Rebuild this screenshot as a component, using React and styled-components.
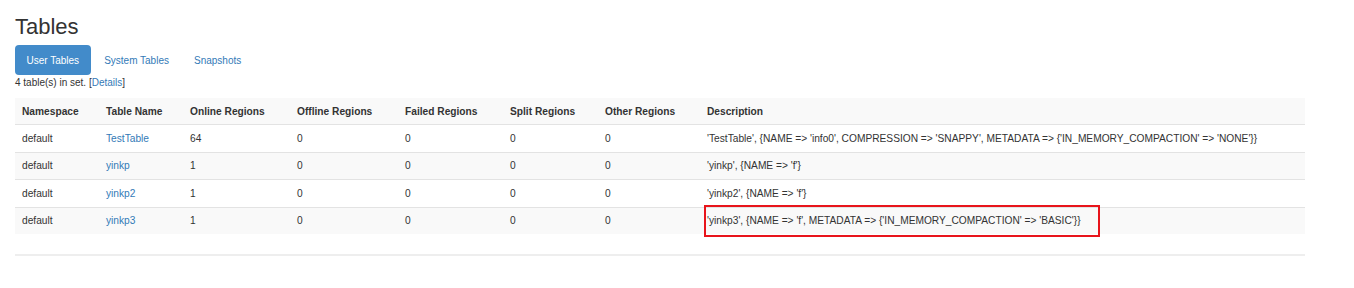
import styled, { createGlobalStyle } from 'styled-components';

const GlobalStyle = createGlobalStyle`
  body {
    margin: 0;
    background: #fff;
    font-family: "Liberation Sans", Arial, sans-serif;
    font-size: 10px;
    color: #333;
  }
`;

const Page = styled.div`
  width: 1290px;
  padding: 0 15px;
`;

const Title = styled.h1`
  margin: 0;
  padding-top: 12px;
  font-size: 22px;
  font-weight: 400;
  line-height: 30px;
  color: #333;
`;

const Tabs = styled.ul`
  display: flex;
  gap: 2px;
  margin: 3px 0 0;
  padding: 0;
  list-style: none;
`;

const Tab = styled.li`
  height: 30px;
  padding: 0 11.5px;
  display: flex;
  align-items: center;
  border-radius: 4px;
  background: ${(p) => (p.$active ? '#428bca' : 'transparent')};
  color: ${(p) => (p.$active ? '#fff' : '#337ab7')};
  cursor: pointer;
`;

const Summary = styled.p`
  margin: 0;
  line-height: 15px;
`;

const Link = styled.a`
  color: #337ab7;
  text-decoration: none;
`;

const Table = styled.table`
  width: 100%;
  margin-top: 8px;
  border-collapse: collapse;
  table-layout: fixed;
  font-size: 10.2px;
`;

const Row = styled.tr`
  background: ${(p) => (p.$striped ? '#f9f9f9' : '#fff')};
  border-top: 1px solid #e3e3e3;

  &:first-child {
    border-top: none;
  }
`;

const HeadCell = styled.th`
  box-sizing: border-box;
  width: ${(p) => p.$w || 'auto'};
  padding: 6.5px 7px 5.5px;
  line-height: 14.4px;
  text-align: left;
  font-weight: 700;
  white-space: nowrap;
`;

const Cell = styled.td`
  padding: 6.5px 7px 5.5px;
  line-height: 14.4px;
  white-space: nowrap;
`;

const Highlight = styled.span`
  position: relative;
  display: inline-block;

  &::after {
    content: '';
    position: absolute;
    top: -9px;
    bottom: -8px;
    left: -3px;
    right: -19px;
    border: 2px solid #e8141b;
  }
`;

const Rule = styled.hr`
  margin: 20px 0 0;
  border: none;
  border-top: 2px solid #eee;
`;

const columns = [
  ['Namespace', '84px'],
  ['Table Name', '84px'],
  ['Online Regions', '107px'],
  ['Offline Regions', '108px'],
  ['Failed Regions', '105px'],
  ['Split Regions', '95px'],
  ['Other Regions', '102px'],
  ['Description', 'auto'],
];

const tables = [
  {
    name: 'TestTable',
    online: 64,
    desc: "'TestTable', {NAME => 'info0', COMPRESSION => 'SNAPPY', METADATA => {'IN_MEMORY_COMPACTION' => 'NONE'}}",
  },
  { name: 'yinkp', online: 1, desc: "'yinkp', {NAME => 'f'}" },
  { name: 'yinkp2', online: 1, desc: "'yinkp2', {NAME => 'f'}" },
  {
    name: 'yinkp3',
    online: 1,
    desc: "'yinkp3', {NAME => 'f', METADATA => {'IN_MEMORY_COMPACTION' => 'BASIC'}}",
    marked: true,
  },
];

function App() {
  return (
    <Page>
      <GlobalStyle />
      <Title>Tables</Title>
      <Tabs>
        <Tab $active>User Tables</Tab>
        <Tab>System Tables</Tab>
        <Tab>Snapshots</Tab>
      </Tabs>
      <Summary>
        4 table(s) in set. [<Link href="#">Details</Link>]
      </Summary>
      <Table>
        <tbody>
          <Row $striped>
            {columns.map(([label, w]) => (
              <HeadCell key={label} $w={w}>
                {label}
              </HeadCell>
            ))}
          </Row>
          {tables.map((t, i) => (
            <Row key={t.name} $striped={i % 2 === 1}>
              <Cell>default</Cell>
              <Cell>
                <Link href="#">{t.name}</Link>
              </Cell>
              <Cell>{t.online}</Cell>
              <Cell>0</Cell>
              <Cell>0</Cell>
              <Cell>0</Cell>
              <Cell>0</Cell>
              <Cell>{t.marked ? <Highlight>{t.desc}</Highlight> : t.desc}</Cell>
            </Row>
          ))}
        </tbody>
      </Table>
      <Rule />
    </Page>
  );
}

export default App;
